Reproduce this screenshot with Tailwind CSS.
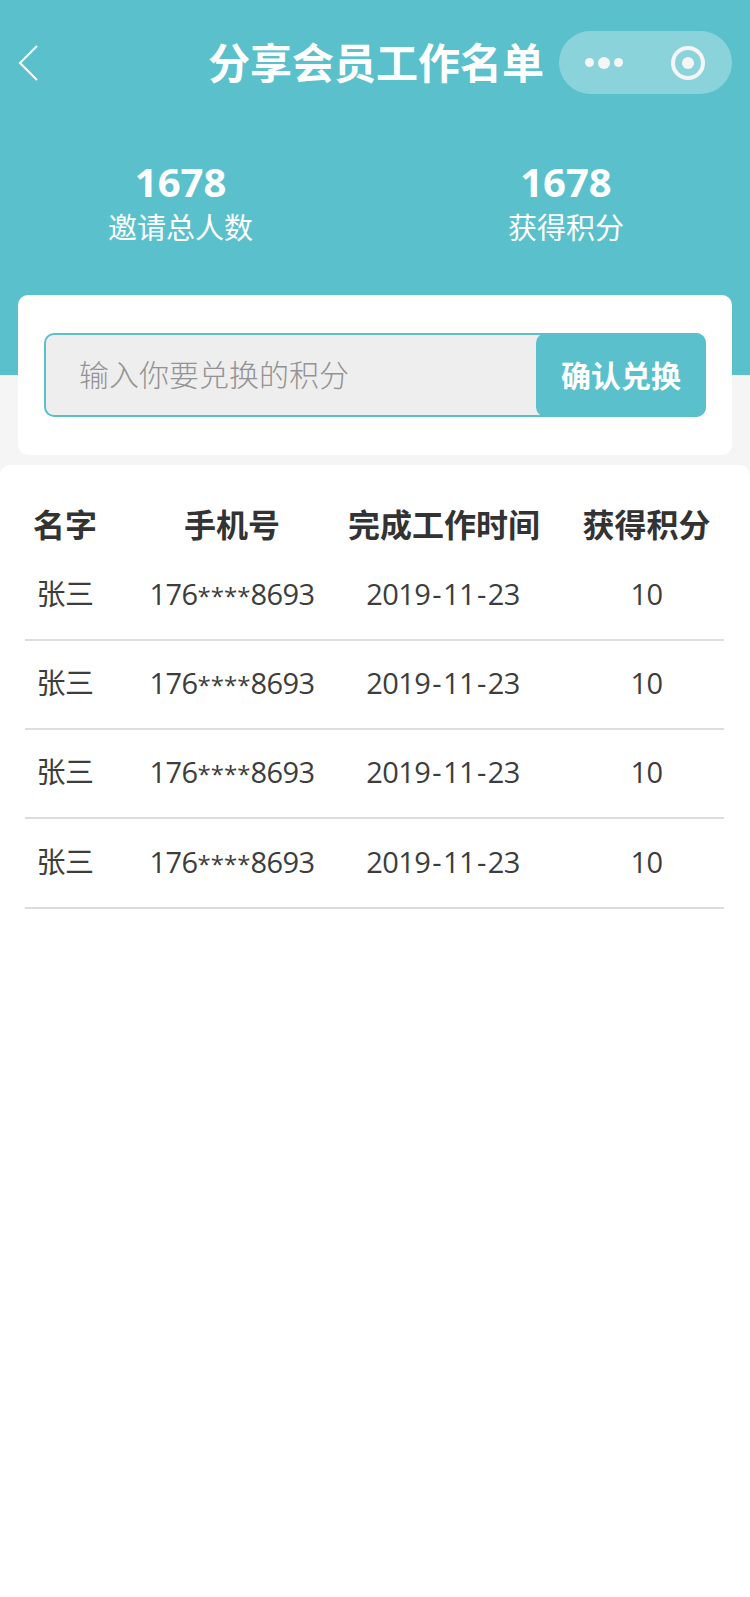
<!doctype html>
<html lang="zh-CN">

<head>
    <meta charset="UTF-8">
    <meta name="viewport" content="width=device-width, initial-scale=1.0">
    <script src="https://cdn.jsdelivr.net/npm/@tailwindcss/browser@4"></script>
    <title>分享会员工作名单</title>
</head>

<body class="bg-[#f5f5f5] font-['Open_Sans','Noto_Sans_CJK_SC',sans-serif]">
    <div class="w-[750px] h-[1597px] flex flex-col overflow-hidden">
        <!-- Header -->
        <header class="h-[375px] shrink-0 bg-[#5ac1cc] text-white">
            <div class="flex items-center pt-[31px] pl-[18px]">
                <svg class="w-[20px] h-[36px]" viewBox="0 0 20 36" fill="none" stroke="#fff" stroke-width="2">
                    <path d="M19 1 L2 18 L19 35" />
                </svg>
                <h1 class="ml-[170px] w-[336px] h-[63px] leading-[63px] text-[42px] font-bold whitespace-nowrap">分享会员工作名单</h1>
                <div class="ml-[15px] w-[173px] h-[63px] rounded-full bg-white/30 flex items-center">
                    <div class="ml-[26px] flex items-center gap-[4px]">
                        <span class="w-[9px] h-[9px] rounded-full bg-[#f5f5f5]"></span>
                        <span class="w-[12px] h-[12px] rounded-full bg-[#f5f5f5]"></span>
                        <span class="w-[9px] h-[9px] rounded-full bg-[#f5f5f5]"></span>
                    </div>
                    <div class="ml-[48px] w-[34px] h-[34px] rounded-full border-[4px] border-[#f5f5f5] flex items-center justify-center">
                        <span class="w-[12px] h-[12px] rounded-full bg-[#f5f5f5]"></span>
                    </div>
                </div>
            </div>

            <!-- Totals -->
            <div class="flex justify-between pl-[108px] pr-[126px] mt-[61px]">
                <div class="flex flex-col items-center">
                    <span class="text-[40px] leading-[53px] font-bold">1678</span>
                    <span class="text-[29px] leading-[40px]">邀请总人数</span>
                </div>
                <div class="flex flex-col items-center">
                    <span class="text-[40px] leading-[53px] font-bold">1678</span>
                    <span class="text-[29px] leading-[40px]">获得积分</span>
                </div>
            </div>
        </header>

        <!-- Exchange card -->
        <div class="-mt-[80px] mx-[18px] h-[160px] shrink-0 bg-white rounded-[10px] px-[26px] pt-[38px]">
            <div class="flex h-[84px] bg-[#eeeeee] border-2 border-[#5ac1cc] rounded-[10px]">
                <div class="flex-1 pl-[33px] text-[30px] leading-[80px] text-[#939393] font-light">输入你要兑换的积分</div>
                <button class="-m-[2px] w-[170px] bg-[#5ac1cc] rounded-[10px] text-white text-[30px] font-bold">确认兑换</button>
            </div>
        </div>

        <!-- List -->
        <div class="mt-[10px] flex-1 bg-white rounded-t-[10px] pl-[25px] pr-[26px] pt-[35px] text-[#3d3d3d]">
            <div class="grid grid-cols-[91px_232px_221px_155px] text-center text-[32px] leading-[50px] font-bold text-[#333333] whitespace-nowrap">
                <div class="pr-[11px]">名字</div>
                <div>手机号</div>
                <div class="pr-[31px]">完成工作时间</div>
                <div>获得积分</div>
            </div>
            <div class="mt-[2px]">
                <div class="grid grid-cols-[91px_232px_221px_155px] text-center text-[29px] tracking-[-0.6px] h-[89px] pb-[3px] items-center border-b-2 border-[#dddddd]">
                    <div class="pr-[11px]">张三</div>
                    <div>176<span class="text-[24px] tracking-[0px]">****</span>8693</div>
                    <div class="pr-[31px]">2019<span class="px-[2px]">-</span>11<span class="px-[2px]">-</span>23</div>
                    <div>10</div>
                </div>
                <div class="grid grid-cols-[91px_232px_221px_155px] text-center text-[29px] tracking-[-0.6px] h-[89px] pb-[3px] items-center border-b-2 border-[#dddddd]">
                    <div class="pr-[11px]">张三</div>
                    <div>176<span class="text-[24px] tracking-[0px]">****</span>8693</div>
                    <div class="pr-[31px]">2019<span class="px-[2px]">-</span>11<span class="px-[2px]">-</span>23</div>
                    <div>10</div>
                </div>
                <div class="grid grid-cols-[91px_232px_221px_155px] text-center text-[29px] tracking-[-0.6px] h-[89px] pb-[3px] items-center border-b-2 border-[#dddddd]">
                    <div class="pr-[11px]">张三</div>
                    <div>176<span class="text-[24px] tracking-[0px]">****</span>8693</div>
                    <div class="pr-[31px]">2019<span class="px-[2px]">-</span>11<span class="px-[2px]">-</span>23</div>
                    <div>10</div>
                </div>
                <div class="grid grid-cols-[91px_232px_221px_155px] text-center text-[29px] tracking-[-0.6px] h-[90px] pb-[2px] items-center border-b-2 border-[#dddddd]">
                    <div class="pr-[11px]">张三</div>
                    <div>176<span class="text-[24px] tracking-[0px]">****</span>8693</div>
                    <div class="pr-[31px]">2019<span class="px-[2px]">-</span>11<span class="px-[2px]">-</span>23</div>
                    <div>10</div>
                </div>
            </div>
        </div>
    </div>
</body>

</html>
